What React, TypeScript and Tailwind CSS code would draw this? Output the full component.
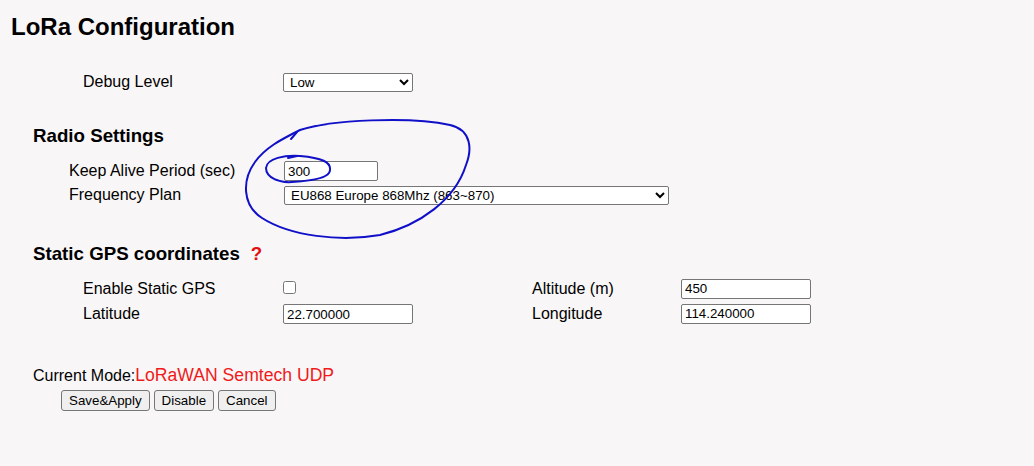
import React from "react";

const font = "font-['Liberation_Sans',Arial,sans-serif]";

function TextInput({ value, w }: { value: string; w: string }) {
  return (
    <input
      type="text"
      defaultValue={value}
      className={`${w} h-[20px] border border-[#767676] rounded-[2px] bg-white px-[3px] text-[13.33px] leading-[16px] text-black outline-none`}
    />
  );
}

function Select({ value, w }: { value: string; w: string }) {
  return (
    <select
      defaultValue={value}
      className={`${w} h-[19px] border border-[#767676] rounded-[2px] bg-white pl-[2px] text-[13.33px] leading-[15px] text-black outline-none`}
    >
      <option value={value}>{value}</option>
    </select>
  );
}

function Btn({ children }: { children: React.ReactNode }) {
  return (
    <button className="h-[21px] border border-[#767676] rounded-[3px] bg-[#efefef] px-[7px] text-[13.33px] leading-[15px] text-black">
      {children}
    </button>
  );
}

export default function App() {
  return (
    <div className={`relative min-h-[466px] w-full bg-[#f9f6f7] text-black ${font}`}>
      <h1 className="pl-[11px] pt-[13px] text-[24px] leading-[28px] font-bold">LoRa Configuration</h1>

      <div className="mt-[29px] flex h-[24px] items-center text-[16px]">
        <div className="w-[283px] pl-[83px]">Debug Level</div>
        <Select value="Low" w="w-[130px]" />
      </div>

      <h3 className="mt-[31px] pl-[33px] text-[18.72px] leading-[22px] font-bold">Radio Settings</h3>

      <div className="mt-[12px] flex h-[24px] items-center text-[16px]">
        <div className="w-[284px] pl-[69px]">Keep Alive Period (sec)</div>
        <TextInput value="300" w="w-[94px]" />
      </div>
      <div className="flex h-[24px] items-center text-[16px]">
        <div className="w-[284px] pl-[69px]">Frequency Plan</div>
        <Select value="EU868 Europe 868Mhz (863~870)" w="w-[385px]" />
      </div>

      <h3 className="mt-[36px] flex items-center pl-[33px] text-[18.72px] leading-[22px] font-bold">
        Static GPS coordinates
        <span className="ml-[11px] text-[#e01010]">?</span>
      </h3>

      <div className="mt-[11px] flex h-[25px] items-center text-[16px]">
        <div className="w-[283px] pl-[83px]">Enable Static GPS</div>
        <div className="w-[249px]">
          <input type="checkbox" className="m-0 h-[13px] w-[13px]" />
        </div>
        <div className="w-[149px]">Altitude (m)</div>
        <TextInput value="450" w="w-[130px]" />
      </div>
      <div className="flex h-[25px] items-center text-[16px]">
        <div className="w-[283px] pl-[83px]">Latitude</div>
        <div className="w-[249px]">
          <TextInput value="22.700000" w="w-[130px]" />
        </div>
        <div className="w-[149px]">Longitude</div>
        <TextInput value="114.240000" w="w-[130px]" />
      </div>

      <div className="mt-[39px] pl-[33px] text-[16px] leading-[20px]">
        Current Mode:<span className="text-[17.6px] text-[#f01a1a]">LoRaWAN Semtech UDP</span>
      </div>
      <div className="mt-[4px] flex gap-[4px] pl-[61px]">
        <Btn>Save&amp;Apply</Btn>
        <Btn>Disable</Btn>
        <Btn>Cancel</Btn>
      </div>

      <svg
        className="pointer-events-none absolute left-0 top-0"
        width="1034"
        height="466"
        viewBox="0 0 1034 466"
        fill="none"
        stroke="#1010c8"
        strokeWidth="2"
        strokeLinecap="round"
        strokeLinejoin="round"
      >
        <path d="M300 130 C330 120, 410 116, 450 125 C472 130, 472 150, 466 165 C455 200, 420 225, 380 235 C340 242, 290 236, 262 218 C242 205, 242 180, 255 162 C265 148, 280 140, 300 130" />
        <path d="M291 139 L297 132" />
        <path d="M288 158 L297 156" />
        <path d="M300 156 C285 155, 267 158, 266 168 C266 178, 280 183, 292 182 C310 181, 330 178, 330 170 C331 162, 322 158, 300 156" />
      </svg>
    </div>
  );
}
